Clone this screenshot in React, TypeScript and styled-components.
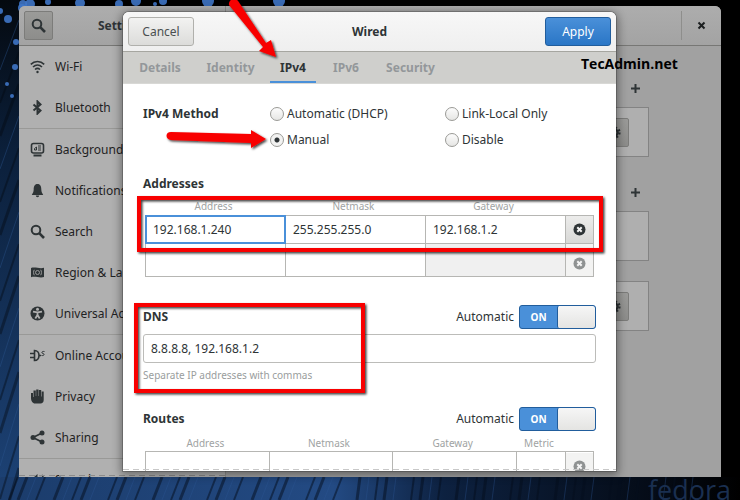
import React from "react";
import styled, { createGlobalStyle, css } from "styled-components";

const Global = createGlobalStyle`
  *, *::before, *::after { box-sizing: border-box; }
  body { margin: 0; background: #000; color: #2e3436; font: 12px/16px "Noto Sans", "Open Sans", sans-serif; }
  button, input { font: inherit; color: inherit; margin: 0; }
  h1, h2, ul, fieldset, legend, p { margin: 0; padding: 0; border: 0; font-size: inherit; font-weight: inherit; }
`;

const Desktop = styled.div`
  position: relative;
  height: 100vh;
  display: flex;
  padding: 6px 19px 23px;
  overflow: hidden;
  background: #000;
`;

const Wallpaper = styled.svg`
  position: absolute;
  inset: 0;
  width: 100%;
  height: 100%;
`;

const Brand = styled.span`
  position: absolute;
  right: 9px;
  bottom: -6px;
  font: 27px/32px "Open Sans", sans-serif;
  color: #1a2f50;
`;

const SettingsWindow = styled.div`
  position: relative;
  flex: 1;
  min-width: 0;
  display: flex;
  flex-direction: column;
  border-radius: 6px 6px 0 0;
  background: #a1a1a1;
`;

const WindowHeader = styled.header`
  display: flex;
  align-items: stretch;
  flex: none;
  height: 40px;
  border-bottom: 1px solid #777775;
  border-radius: 6px 6px 0 0;
  background: linear-gradient(#adadad, #a3a3a3);
`;

const HeaderSide = styled.div`
  width: 207px;
  display: flex;
  align-items: center;
  padding: 0 5px;
  border-right: 1px solid #8e8e8c;
`;

const WindowTitle = styled.h1`
  flex: 1;
  padding-right: 28px;
  text-align: center;
  font-weight: 700;
`;

const ToolButton = styled.button`
  display: flex;
  align-items: center;
  justify-content: center;
  width: 29px;
  height: 29px;
  padding: 0;
  border: 1px solid #7c7c7a;
  border-radius: 2px;
  background: linear-gradient(#9b9b99, #8d8d8b);
`;

const HeaderEnd = styled.div`
  margin: 5px 0 5px auto;
  width: 40px;
  display: flex;
  border-left: 1px solid #8e8e8c;
`;

const FlatButton = styled.button`
  display: flex;
  align-items: center;
  justify-content: center;
  flex: 1;
  padding: 0;
  border: 0;
  background: none;
`;

const WindowBody = styled.div`
  display: flex;
  flex: 1;
  min-height: 0;
`;

const Sidebar = styled.ul`
  width: 207px;
  list-style: none;
  overflow: hidden;
  border-right: 1px solid #8e8e8c;
  background: #b0b0b0;
`;

const SidebarRow = styled.li<{ $divided?: boolean }>`
  display: flex;
  align-items: center;
  gap: 10px;
  height: ${(p) => (p.$divided ? 42 : 41)}px;
  padding-left: 11px;
  white-space: nowrap;
  color: #1f2223;
  ${(p) => p.$divided && css`border-top: 1px solid #999997;`}
`;

const Glyph = styled.svg`
  flex: none;
  width: 15px;
  height: 15px;
`;

const Panel = styled.main`
  flex: 1;
  display: flex;
  flex-direction: column;
  padding: 31px 72px 0 60px;
`;

const DeviceHead = styled.div<{ $space: number }>`
  display: flex;
  justify-content: flex-end;
  margin-top: ${(p) => p.$space}px;
  padding-right: 5px;
  height: 20px;
`;

const AddButton = styled.button`
  display: flex;
  align-items: center;
  justify-content: center;
  width: 18px;
  padding: 0;
  border: 0;
  background: none;
`;

const DeviceCard = styled.div<{ $space: number }>`
  display: flex;
  align-items: center;
  justify-content: flex-end;
  height: 50px;
  margin-top: ${(p) => p.$space}px;
  padding-right: 19px;
  border: 1px solid #838383;
  background: #afafaf;
`;

const Dialog = styled.section`
  position: absolute;
  inset: 6px 105px 6px 104px;
  display: flex;
  flex-direction: column;
  overflow: hidden;
  border-radius: 6px 6px 0 0;
  background: #fff;
`;

const DialogShadow = styled.div`
  position: absolute;
  inset: 6px 105px 6px 104px;
  border-radius: 6px 6px 0 0;
  box-shadow: 0 2px 10px 2px rgba(0, 0, 0, 0.4), 0 0 0 1px rgba(0, 0, 0, 0.2);
`;

const DialogHeader = styled.header`
  display: flex;
  align-items: center;
  justify-content: space-between;
  flex: none;
  height: 40px;
  padding: 0 5px;
  border-bottom: 1px solid #a6a6a0;
  background: linear-gradient(#f7f7f7, #efefef);
`;

const DialogTitle = styled.h2`
  font-weight: 700;
`;

const ActionButton = styled.button<{ $primary?: boolean }>`
  width: 66px;
  height: 29px;
  padding: 0;
  border: 1px solid #b0b0ac;
  border-radius: 3px;
  background: linear-gradient(#f2f2f1, #dcdcda);
  color: #4a4f50;
  ${(p) =>
    p.$primary &&
    css`
      border-color: #215d9c;
      background: linear-gradient(#4a90d9, #2a76c6);
      color: #fff;
    `}
`;

const Tabs = styled.nav`
  display: flex;
  flex: none;
  height: 32px;
  padding: 0 6px;
  gap: 6px;
  border-bottom: 1px solid #d8d8d5;
  background: #cfcfcc;
`;

const Tab = styled.button<{ $active?: boolean; $width: number }>`
  width: ${(p) => p.$width}px;
  padding: 0;
  border: 0;
  border-top: 2px solid transparent;
  border-bottom: 2px solid ${(p) => (p.$active ? "#4a90d9" : "transparent")};
  background: none;
  color: ${(p) => (p.$active ? "#2e3436" : "#93979a")};
  font-weight: 700;
`;

const DialogBody = styled.div`
  flex: 1;
  min-height: 0;
  overflow: hidden;
  padding: 20px 20px 0;
`;

const Methods = styled.fieldset`
  display: grid;
  grid-template-columns: 127px 175px 1fr;
  row-gap: 6px;
`;

const Heading = styled.h2`
  font-weight: 700;
`;

const RadioLabel = styled.label`
  display: flex;
  align-items: center;
  gap: 3px;
  height: 20px;
`;

const MethodTitle = styled(Heading)`
  grid-row: span 2;
  line-height: 20px;
`;

const Radio = styled.input`
  appearance: none;
  width: 14px;
  height: 14px;
  border: 1px solid #9a9a96;
  border-radius: 50%;
  background: linear-gradient(#fcfcfc, #e6e6e4);
  &:checked {
    background: radial-gradient(circle, #2e3436 0 2px, #f2f2f1 3px);
  }
`;

const AddressTitle = styled(Heading)`
  margin-top: 26px;
`;

const AddressTable = styled.table<{ $routes?: boolean }>`
  width: calc(100% - 4px);
  margin: ${(p) => (p.$routes ? 5 : 6)}px 2px 0;
  border-collapse: collapse;
  table-layout: fixed;
  th {
    height: ${(p) => (p.$routes ? 16 : 17)}px;
    padding: 0 4px 0 0;
    font-size: 10px;
    line-height: 12px;
    font-weight: 400;
    color: #a0a3a3;
  }
  td {
    height: ${(p) => (p.$routes ? 29 : 28)}px;
    padding: 0;
    border: 1px solid #b6b6b3;
  }
  tr.second td { height: 33px; }
  tr.second input, tr.second button { height: 32px; }
  tr.second button { padding-top: 7px; }
`;

const Cell = styled.input<{ $focus?: boolean }>`
  display: block;
  width: 100%;
  height: 27px;
  padding: 0 7px;
  border: 0;
  border-radius: 0;
  outline: ${(p) => (p.$focus ? "2px solid #4a90d9" : "none")};
  outline-offset: -1px;
  background: #fff;
  &:disabled { background: #f0f0f0; }
`;

const RemoveButton = styled.button`
  display: flex;
  align-items: center;
  justify-content: center;
  width: 100%;
  height: 27px;
  padding: 0;
  border: 0;
  background: linear-gradient(#ececeb, #d8d8d6);
  &:disabled { background: #f3f3f2; }
`;

const SectionHead = styled.div<{ $space: number }>`
  display: flex;
  align-items: center;
  gap: 5px;
  height: 24px;
  margin-top: ${(p) => p.$space}px;
  ${Heading} { margin-right: auto; }
`;

const Switch = styled.button`
  display: flex;
  width: 77px;
  height: 24px;
  padding: 0;
  border: 1px solid #215d9c;
  border-radius: 3px;
  overflow: hidden;
  background: #4a90d9;
  color: #fff;
  font-size: 10px;
  font-weight: 700;
  line-height: 22px;
  span { flex: 1; }
`;

const Knob = styled.i`
  width: 38px;
  height: 22px;
  border-left: 1px solid #215d9c;
  border-radius: 2px;
  background: linear-gradient(#f6f6f6, #e4e4e2);
`;

const DnsInput = styled.input`
  display: block;
  width: 100%;
  height: 29px;
  margin-top: 5px;
  padding: 0 7px;
  border: 1px solid #bcbcb9;
  border-radius: 3px;
  background: #fff;
`;

const Hint = styled.p`
  margin-top: 4px;
  font-size: 10px;
  color: #999d9d;
`;

const DashEdge = styled.div<{ $light?: boolean }>`
  position: absolute;
  left: 0;
  bottom: 1px;
  width: ${(p) => (p.$light ? "100%" : "207px")};
  height: 1px;
  background: repeating-linear-gradient(90deg, ${(p) => (p.$light ? "#c8c8c8" : "#8c8c8c")} 0 6px, transparent 6px 10px);
`;

const Annotations = styled.svg`
  position: absolute;
  left: 0;
  top: 0;
  pointer-events: none;
`;

const Watermark = styled.span`
  position: absolute;
  left: 581px;
  top: 54px;
  font: 700 14px/20px "Open Sans", sans-serif;
  color: #000;
`;

const SearchShape = () => (
  <g fill="none" stroke="#2e3436" strokeWidth="2"><circle cx="6" cy="6" r="4.3" /><path d="M9.2 9.2 14 14" strokeWidth="2.6" /></g>
);
const dark = "#2e3436";

const shapes: Record<string, React.ReactNode> = {
  wifi: <g fill="none" stroke={dark} strokeWidth="1.6"><path d="M.8 5.4C4.5 1.6 10.5 1.6 14.2 5.4" /><path d="M3 8c2.7-2.6 6.3-2.6 9 0" /><path d="M5 10.5c1.5-1.3 3.5-1.3 5 0" /><circle cx="7.5" cy="13" r="1.2" fill={dark} stroke="none" /></g>,
  bluetooth: <path d="M3.5 4.5 10.5 10.5 7.5 13.5V1.5L10.5 4.5 3.5 10.5" fill="none" stroke={dark} strokeWidth="2" />,
  background: <g fill="none" stroke={dark} strokeWidth="1.6"><rect x="1.5" y="1.5" width="12" height="9.5" rx="2" /><path d="M3.5 13.5h8" strokeWidth="2" /><path d="M8 4h3M8 6h3M8 8h3M4.5 8V6.5L6.5 5v3z" strokeWidth="1" /></g>,
  bell: <path d="M7.5 1C4.5 1 3.7 3.5 3.7 6.5 3.7 9 2.5 10.5 1.8 12h11.4c-.7-1.5-1.9-3-1.9-5.5C11.3 3.5 10.5 1 7.5 1zM5.8 12.5h3.4a1.7 1.7 0 0 1-3.4 0z" fill={dark} />,
  search: <SearchShape />,
  region: <g><path d="M1 3c4-1.5 9 1.2 13-.3V12c-4 1.5-9-1.2-13 .3z" fill={dark} /><g fill="none" stroke="#999"><circle cx="7.5" cy="7.5" r="2" /><path d="M4.3 4.8c-1 1.5-1 3.9 0 5.4M10.7 4.8c1 1.5 1 3.9 0 5.4" /></g></g>,
  access: <g><circle cx="7.5" cy="7.5" r="7" fill={dark} /><circle cx="7.5" cy="3.3" r="1.5" fill="#b0b0b0" /><path d="M3 5.6 7.5 6.4 12 5.600M7.500 6v3L5.300 12.500M7.500 9l2.200 3.500" stroke="#b0b0b0" strokeWidth="1.800" fill="none" /></g>,
  online: <g fill="none" stroke={dark} strokeWidth="1.6"><path d="M4.5 2.5c6 0 6 10 0 10z" /><path d="M0 5.5h4M0 9.5h4M9 7.5h2" /><path d="M14.5 3.5c-3.200-.5-3.200 1.700-1.500 2 1.700.3 1.500 2.500-1.500 2" strokeWidth="1" /></g>,
  privacy: <path d="M1 7V4h2v4h.5V1.5h2.300V7h.4V.5h2.300V7h.4V1h2.300v6.500h.5V2.500h2V11c0 2-1.300 3.500-3.200 3.500H5C2.800 14.500 1 12 1 9z" fill={dark} />,
  sharing: <g fill={dark}><path d="M12 3 3 7.5 12 12" stroke={dark} strokeWidth="1.8" fill="none" /><circle cx="12" cy="3" r="2.5" /><circle cx="3" cy="7.5" r="2.5" /><circle cx="12" cy="12" r="2.5" /></g>,
  sound: <g fill={dark}><path d="M1 5.5h2.500L7.500 2v11L3.500 9.500H1z" /><path d="M9.500 5c1.200 1.300 1.200 3.700 0 5M11.700 3c2.400 2.300 2.400 6.700 0 9" fill="none" stroke={dark} strokeWidth="1.6" /></g>,
};

const rows: { icon: string; label: string; divided?: boolean }[] = [
  { icon: "wifi", label: "Wi-Fi" },
  { icon: "bluetooth", label: "Bluetooth" },
  { icon: "background", label: "Background", divided: true },
  { icon: "bell", label: "Notifications" },
  { icon: "search", label: "Search" },
  { icon: "region", label: "Region & Language" },
  { icon: "access", label: "Universal Access" },
  { icon: "online", label: "Online Accounts", divided: true },
  { icon: "privacy", label: "Privacy" },
  { icon: "sharing", label: "Sharing" },
  { icon: "sound", label: "Sound", divided: true },
];

const Icon = ({ name }: { name: string }) => (
  <Glyph viewBox="0 0 15 15" aria-hidden="true">{shapes[name]}</Glyph>
);

const GearIcon = () => (
  <Glyph viewBox="0 0 15 15" aria-hidden="true">
    <circle cx="7.5" cy="7.5" r="3.2" fill="none" stroke={dark} strokeWidth="2.2" />
    <circle cx="7.5" cy="7.5" r="5" fill="none" stroke={dark} strokeWidth="2.2" strokeDasharray="1.96 1.96" />
  </Glyph>
);

const PlusIcon = () => (
  <Glyph viewBox="0 0 15 15" aria-hidden="true"><path d="M3 7.5h9M7.5 3v9" stroke={dark} strokeWidth="2" /></Glyph>
);

const RemoveIcon = ({ muted }: { muted?: boolean }) => (
  <Glyph viewBox="0 0 15 15" aria-hidden="true">
    <circle cx="7.5" cy="7.5" r="6" fill={muted ? "#8f9292" : dark} />
    <path d="M5.300 5.300l4.400 4.400M9.700 5.300l-4.400 4.400" stroke="#f4f4f4" strokeWidth="2" />
  </Glyph>
);

const bokeh = [
  [23, 4, 4], [0, 11, 3], [8, 19, 4], [22, 8, 4], [30, 4, 5], [48, 2, 3], [80, 3, 5], [119, 4, 4], [136, 1, 5], [155, 4, 2], [163, 1, 4],
  [208, 1, 6], [279, 1, 6], [16, 42, 3], [15, 67, 3], [7, 84, 2], [12, 96, 2],
];

const AutoSwitch = ({ label }: { label: string }) => (
  <>
    <span>Automatic</span>
    <Switch type="button" role="switch" aria-checked="true" aria-label={label}><span>ON</span><Knob /></Switch>
  </>
);

export default function App() {
  return (
    <Desktop>
      <Global />
      <Wallpaper viewBox="0 0 740 500" preserveAspectRatio="none" aria-hidden="true">
        <defs>
          <linearGradient id="left" x1="0" y1="0" x2="0" y2="1">
            <stop offset="0" stopColor="#04090f" /><stop offset=".3" stopColor="#0b1f3a" /><stop offset="1" stopColor="#1d4377" />
          </linearGradient>
          <linearGradient id="floor" x1="0" y1="0" x2="1" y2="0">
            <stop offset="0" stopColor="#1b3c6b" /><stop offset=".45" stopColor="#234a83" /><stop offset=".6" stopColor="#0d2140" /><stop offset=".9" stopColor="#040a14" /><stop offset="1" stopColor="#000" />
          </linearGradient>
        </defs>
        <rect width="19" height="500" fill="url(#left)" />
        <rect y="477" width="740" height="23" fill="url(#floor)" />
        {Array.from({ length: 64 }, (_, i) => (
          <path key={i} d={`M${i * 11 + ((i * 7) % 9)} 477l-${i < 32 ? 9 : 3} 23`} stroke={i % 3 ? "#050e1d" : "#2d5796"} strokeWidth={1 + (i % 3)} opacity={i % 3 ? 0.5 : 0.35} />
        ))}
        {Array.from({ length: 16 }, (_, i) => (
          <path key={i} d={`M19 ${20 + i * 32}L0 ${70 + i * 33}`} stroke={i % 3 ? "#03080f" : "#2c5690"} strokeWidth={1 + (i % 3)} opacity=".4" />
        ))}
        {bokeh.map(([x, y, r], i) => <circle key={i} cx={x} cy={y} r={r} fill="#3f76c6" opacity=".9" />)}
      </Wallpaper>
      <Brand>fedora</Brand>

      <SettingsWindow>
        <WindowHeader>
          <HeaderSide>
            <ToolButton type="button" aria-label="Search"><Icon name="search" /></ToolButton>
            <WindowTitle>Settings</WindowTitle>
          </HeaderSide>
          <HeaderEnd>
            <FlatButton type="button" aria-label="Close">
              <Glyph viewBox="0 0 15 15"><path d="M4.500 4.500l6 6M10.500 4.500l-6 6" stroke="#1c1f20" strokeWidth="2" /></Glyph>
            </FlatButton>
          </HeaderEnd>
        </WindowHeader>
        <WindowBody>
          <Sidebar>
            {rows.map((r) => (
              <SidebarRow key={r.label} $divided={r.divided}><Icon name={r.icon} />{r.label}</SidebarRow>
            ))}
          </Sidebar>
          <Panel>
            <DeviceHead $space={1}><AddButton type="button" aria-label="Add connection"><PlusIcon /></AddButton></DeviceHead>
            <DeviceCard $space={9}><ToolButton type="button" aria-label="Wired options"><GearIcon /></ToolButton></DeviceCard>
            <DeviceHead $space={25}><AddButton type="button" aria-label="Add VPN"><PlusIcon /></AddButton></DeviceHead>
            <DeviceCard $space={9} />
            <DeviceCard $space={20}><ToolButton type="button" aria-label="Proxy options"><GearIcon /></ToolButton></DeviceCard>
          </Panel>
        </WindowBody>
        <DashEdge />

        <DialogShadow />
        <Dialog role="dialog" aria-label="Wired">
          <DialogHeader>
            <ActionButton type="button">Cancel</ActionButton>
            <DialogTitle>Wired</DialogTitle>
            <ActionButton type="button" $primary>Apply</ActionButton>
          </DialogHeader>
          <Tabs>
            <Tab type="button" $width={62}>Details</Tab>
            <Tab type="button" $width={67}>Identity</Tab>
            <Tab type="button" $width={46} $active>IPv4</Tab>
            <Tab type="button" $width={48}>IPv6</Tab>
            <Tab type="button" $width={69}>Security</Tab>
          </Tabs>
          <DialogBody>
            <Methods aria-label="IPv4 Method">
              <MethodTitle>IPv4 Method</MethodTitle>
              <RadioLabel><Radio type="radio" name="method" />Automatic (DHCP)</RadioLabel>
              <RadioLabel><Radio type="radio" name="method" />Link-Local Only</RadioLabel>
              <RadioLabel><Radio type="radio" name="method" defaultChecked />Manual</RadioLabel>
              <RadioLabel><Radio type="radio" name="method" />Disable</RadioLabel>
            </Methods>

            <AddressTitle>Addresses</AddressTitle>
            <AddressTable>
              <colgroup><col /><col /><col /><col width="28" /></colgroup>
              <thead><tr><th>Address</th><th>Netmask</th><th>Gateway</th><th aria-label="Remove" /></tr></thead>
              <tbody>
                <tr>
                  <td><Cell $focus aria-label="Address" defaultValue="192.168.1.240" /></td>
                  <td><Cell aria-label="Netmask" defaultValue="255.255.255.0" /></td>
                  <td><Cell aria-label="Gateway" defaultValue="192.168.1.2" /></td>
                  <td><RemoveButton type="button" aria-label="Remove address"><RemoveIcon /></RemoveButton></td>
                </tr>
                <tr className="second">
                  <td><Cell aria-label="Second address" /></td>
                  <td><Cell aria-label="Second netmask" /></td>
                  <td><Cell aria-label="Second gateway" disabled /></td>
                  <td><RemoveButton type="button" aria-label="Remove second address" disabled><RemoveIcon muted /></RemoveButton></td>
                </tr>
              </tbody>
            </AddressTable>

            <SectionHead $space={28}><Heading>DNS</Heading><AutoSwitch label="Automatic DNS" /></SectionHead>
            <DnsInput aria-label="DNS servers" defaultValue="8.8.8.8, 192.168.1.2" />
            <Hint>Separate IP addresses with commas</Hint>

            <SectionHead $space={24}><Heading>Routes</Heading><AutoSwitch label="Automatic routes" /></SectionHead>
            <AddressTable $routes>
              <colgroup><col /><col /><col /><col width="49" /><col width="28" /></colgroup>
              <thead><tr><th>Address</th><th>Netmask</th><th>Gateway</th><th>Metric</th><th aria-label="Remove" /></tr></thead>
              <tbody>
                <tr>
                  <td><Cell aria-label="Route address" /></td>
                  <td><Cell aria-label="Route netmask" /></td>
                  <td><Cell aria-label="Route gateway" /></td>
                  <td><Cell aria-label="Route metric" /></td>
                  <td><RemoveButton type="button" aria-label="Remove route" disabled><RemoveIcon muted /></RemoveButton></td>
                </tr>
              </tbody>
            </AddressTable>
          </DialogBody>
          <DashEdge $light />
        </Dialog>
      </SettingsWindow>

      <Watermark>TecAdmin.net</Watermark>
      <Annotations width="740" height="500" viewBox="0 0 740 500" aria-hidden="true">
        <defs><filter id="drop" x="-20%" y="-20%" width="140%" height="140%"><feDropShadow dx="1.5" dy="1.5" stdDeviation="1" floodOpacity=".75" /></filter></defs>
        <g filter="url(#drop)">
          <g fill="none" stroke="#f80000" strokeWidth="4">
            <rect x="139" y="198" width="462" height="52" />
            <rect x="136" y="305" width="227" height="86" />
          </g>
          <g fill="#f80000">
            <path d="M229 5c-1-6 7-8 9-4l28 42 5-3 5 17-17-6 4-4z" />
            <path d="M171 132l80 2v-4l15 9-15 9v-5l-80-3c-6-1-6-8 0-8z" />
          </g>
        </g>
      </Annotations>
    </Desktop>
  );
}
